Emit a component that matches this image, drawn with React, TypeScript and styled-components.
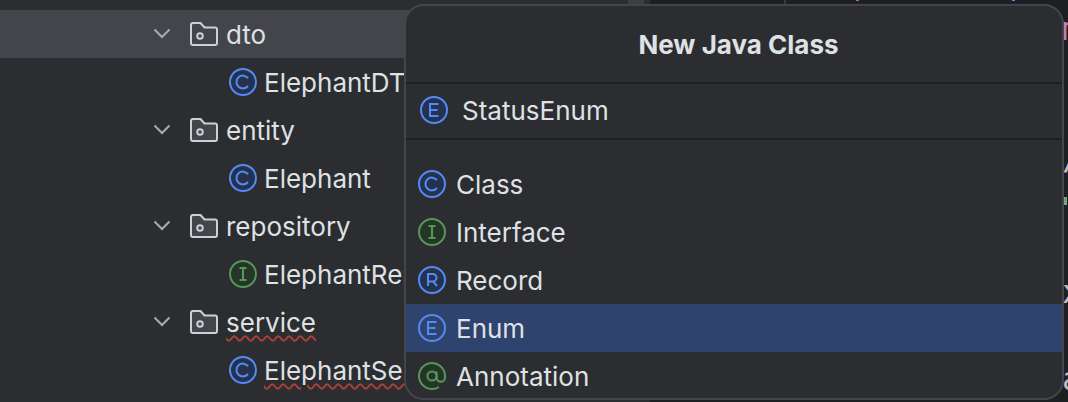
import styled, { createGlobalStyle } from "styled-components";

const GlobalStyle = createGlobalStyle`
  html, body {
    margin: 0;
    padding: 0;
    background: #2b2d30;
  }
  body {
    font-family: Inter, "Liberation Sans", sans-serif;
  }
`;

const Page = styled.div`
  position: relative;
  display: flex;
  width: 1068px;
  height: 402px;
  overflow: hidden;
  background: #2b2d30;
`;
const Tree = styled.div`
  position: relative;
  flex: 0 0 650px;
  display: flex;
  flex-direction: column;
  padding-top: 10px;
  box-sizing: border-box;
`;
const ScrollThumb = styled.div`
  position: absolute;
  top: 0;
  left: 628px;
  width: 16px;
  height: 4px;
  background: #3c3e41;
`;
const TreeRow = styled.div<{ $selected?: boolean; $file?: boolean }>`
  display: flex;
  align-items: center;
  flex: 0 0 48px;
  padding-left: ${(p) => (p.$file ? "227px" : "150px")};
  background: ${(p) => (p.$selected ? "#43454a" : "transparent")};
`;
const Chevron = styled.svg`
  flex: none;
  margin-right: 14px;
`;
const RowLabel = styled.span<{ $error?: boolean; $file?: boolean }>`
  margin-left: ${(p) => (p.$file ? "5px" : "6px")};
  padding-top: 2px;
  font-size: 26px;
  line-height: 32px;
  color: #dfe1e5;
  white-space: nowrap;
  text-decoration: ${(p) => (p.$error ? "underline wavy #a8433c 1.5px" : "none")};
  text-underline-offset: 3px;
`;
const Editor = styled.div`
  flex: 1;
  display: flex;
  flex-direction: column;
  background: #1e1f22;
  overflow: hidden;
`;
const TopStrip = styled.div`
  flex: 0 0 4px;
  display: flex;
`;
const StripMark = styled.div<{ $left: number; $color: string; $width: number; $height: number }>`
  margin-left: ${(p) => p.$left}px;
  width: ${(p) => p.$width}px;
  height: ${(p) => p.$height}px;
  background: ${(p) => p.$color};
`;
const CodeGlyph = styled.div<{ $top: number; $color: string }>`
  flex: none;
  margin-top: ${(p) => p.$top}px;
  padding-left: 412px;
  font-family: "DejaVu Sans Mono", monospace;
  font-size: 32px;
  line-height: 30px;
  height: 30px;
  color: ${(p) => p.$color};
`;
const GreenMark = styled.div`
  flex: none;
  margin-top: 24px;
  margin-left: 414px;
  width: 3px;
  height: 8px;
  background: #6aab73;
`;
const Popup = styled.div`
  position: absolute;
  top: 4px;
  left: 404px;
  width: 660px;
  height: 396px;
  box-sizing: border-box;
  display: flex;
  flex-direction: column;
  background: #2b2d30;
  border: 2px solid #43454a;
  border-radius: 20px;
  overflow: hidden;
`;
const PopupTitle = styled.div`
  flex: 0 0 76px;
  display: flex;
  align-items: center;
  justify-content: center;
  font-size: 26px;
  font-weight: 700;
  color: #dfe1e5;
  padding-left: 9px;
  box-sizing: border-box;
`;
const NameField = styled.div`
  flex: 0 0 58px;
  box-sizing: border-box;
  display: flex;
  align-items: center;
  gap: 12px;
  padding-left: 12px;
  padding-bottom: 2px;
  border-top: 2px solid #1e1f22;
  border-bottom: 2px solid #1e1f22;
  font-size: 26px;
  color: #dfe1e5;
`;
const KindList = styled.div`
  display: flex;
  flex-direction: column;
  padding-top: 20px;
`;
const KindRow = styled.div<{ $active?: boolean }>`
  flex: 0 0 48px;
  display: flex;
  align-items: center;
  gap: 8px;
  padding-left: 10px;
  font-size: 26px;
  color: #dfe1e5;
  background: ${(p) => (p.$active ? "#2e436e" : "transparent")};
`;
const IconSvg = styled.svg`
  flex: none;
`;

type Kind = "class" | "interface" | "record" | "enum" | "annotation";

const palette = {
  blue: { stroke: "#548af7", fill: "#25324d" },
  green: { stroke: "#57965c", fill: "#253627" },
};

const letterPath: Record<Kind, string> = {
  class: "M21 12.2A6.4 6.4 0 1 0 21 19.8",
  interface: "M12.5 10H19.5M16 10V22M12.5 22H19.5",
  record: "M12 22V10H16.8A3.7 3.7 0 0 1 16.8 17.4H12M17 17.4L21 22",
  enum: "M20.5 10H12V22H20.5M12 16H19.5",
  annotation: "",
};

const KindIcon = ({ kind, active }: { kind: Kind; active?: boolean }) => {
  const tone = kind === "interface" || kind === "annotation" ? palette.green : palette.blue;
  if (kind === "annotation") {
    return (
      <IconSvg width="32" height="32" viewBox="0 0 32 32" fill="none">
        <circle cx="16" cy="16" r="13" fill={tone.fill} stroke="none" />
        <circle cx="16" cy="16" r="4.6" stroke={tone.stroke} strokeWidth="2" />
        <path
          d="M20.6 11.5V17.5A4.2 4.2 0 0 0 29 17.5V16A13 13 0 1 0 23 27"
          stroke={tone.stroke}
          strokeWidth="2"
        />
      </IconSvg>
    );
  }
  return (
    <IconSvg width="32" height="32" viewBox="0 0 32 32" fill="none">
      <circle
        cx="16"
        cy="16"
        r="13"
        fill={active ? "none" : tone.fill}
        stroke={tone.stroke}
        strokeWidth="2"
      />
      <path d={letterPath[kind]} stroke={tone.stroke} strokeWidth="2" />
    </IconSvg>
  );
};

const FolderIcon = () => (
  <IconSvg width="32" height="32" viewBox="0 0 32 32" fill="none">
    <path
      d="M5 5H12.5L16.5 9.5H27A2 2 0 0 1 29 11.5V25A2 2 0 0 1 27 27H5A2 2 0 0 1 3 25V7A2 2 0 0 1 5 5Z"
      fill="#43454a"
      stroke="#ced0d6"
      strokeWidth="2"
    />
    <circle cx="12" cy="18" r="2.8" stroke="#ced0d6" strokeWidth="2" />
  </IconSvg>
);

const FolderRow = ({ name, selected, error }: { name: string; selected?: boolean; error?: boolean }) => (
  <TreeRow $selected={selected}>
    <Chevron width="24" height="24" viewBox="0 0 24 24" fill="none">
      <path d="M4.5 7.5L12 15L19.5 7.5" stroke="#a8abb2" strokeWidth="2" />
    </Chevron>
    <FolderIcon />
    <RowLabel $error={error}>{name}</RowLabel>
  </TreeRow>
);

const FileRow = ({ name, kind, error }: { name: string; kind: Kind; error?: boolean }) => (
  <TreeRow $file>
    <KindIcon kind={kind} />
    <RowLabel $file $error={error}>{name}</RowLabel>
  </TreeRow>
);

const kinds: { kind: Kind; label: string }[] = [
  { kind: "class", label: "Class" },
  { kind: "interface", label: "Interface" },
  { kind: "record", label: "Record" },
  { kind: "enum", label: "Enum" },
  { kind: "annotation", label: "Annotation" },
];

const App = () => {
  return (
    <Page>
      <GlobalStyle />
      <Tree>
        <ScrollThumb />
        <FolderRow name="dto" selected />
        <FileRow name="ElephantDTO" kind="class" />
        <FolderRow name="entity" />
        <FileRow name="Elephant" kind="class" />
        <FolderRow name="repository" />
        <FileRow name="ElephantRepository" kind="interface" />
        <FolderRow name="service" error />
        <FileRow name="ElephantService" kind="class" error />
      </Tree>
      <Editor>
        <TopStrip>
          <StripMark $left={134} $width={2} $height={4} $color="#393b40" />
          <StripMark $left={70} $width={3} $height={1} $color="#b5734f" />
          <StripMark $left={153} $width={3} $height={1} $color="#548af7" />
        </TopStrip>
        <CodeGlyph $top={10} $color="#c77dbb">m</CodeGlyph>
        <CodeGlyph $top={99} $color="#bcbec4">/</CodeGlyph>
        <GreenMark />
        <CodeGlyph $top={72} $color="#bcbec4">x</CodeGlyph>
        <CodeGlyph $top={57} $color="#bcbec4">a</CodeGlyph>
      </Editor>
      <Popup>
        <PopupTitle>New Java Class</PopupTitle>
        <NameField>
          <KindIcon kind="enum" />
          StatusEnum
        </NameField>
        <KindList>
          {kinds.map((k) => (
            <KindRow key={k.kind} $active={k.kind === "enum"}>
              <KindIcon kind={k.kind} active={k.kind === "enum"} />
              {k.label}
            </KindRow>
          ))}
        </KindList>
      </Popup>
    </Page>
  );
};

export default App;
